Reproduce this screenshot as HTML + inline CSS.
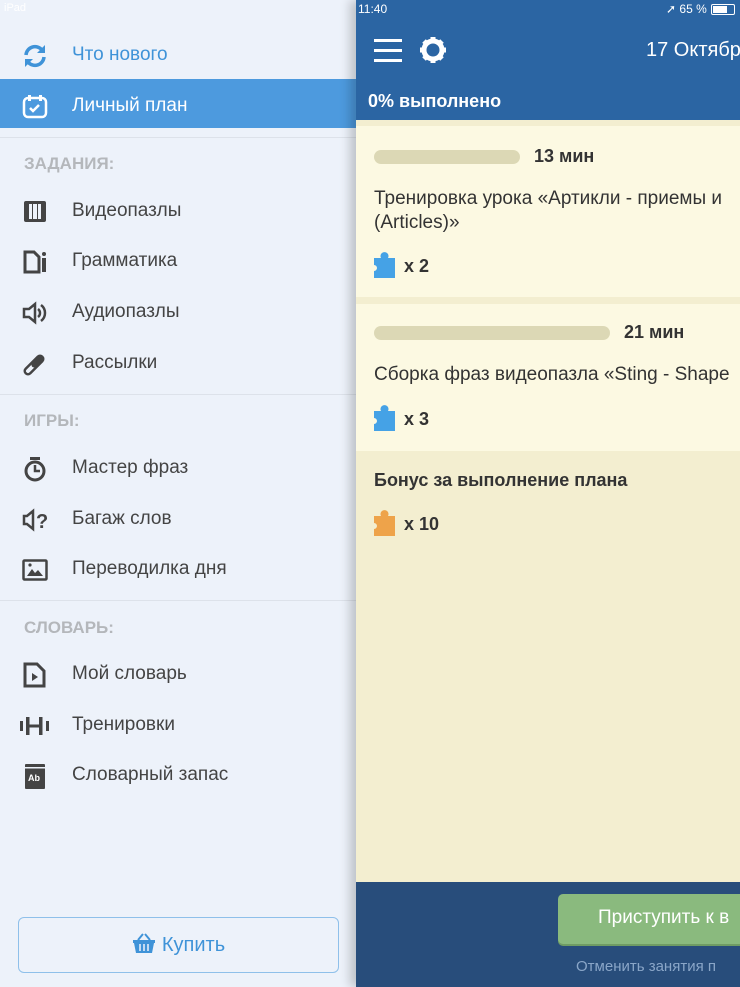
<!DOCTYPE html>
<html><head><meta charset="utf-8"><style>
*{margin:0;padding:0;box-sizing:border-box}
body{width:740px;height:987px;overflow:hidden;position:relative;font-family:"Liberation Sans","DejaVu Sans",sans-serif;background:#edf2fa}
.side{position:absolute;left:0;top:0;width:356px;height:987px;background:#edf2fa}
.it{position:absolute;left:0;width:356px;height:40px;font-size:19px;color:#444;line-height:44px}
.it .t{position:absolute;left:72px;top:0}
.it svg{position:absolute;left:22px;top:10px}
.hd{position:absolute;left:24px;font-size:17px;font-weight:bold;color:#b4b7bb;margin-top:1px}
.dv{position:absolute;left:0;width:356px;height:1px;background:#dde2ea}
.main{position:absolute;left:356px;top:0;width:384px;height:987px;box-shadow:-6px 0 10px rgba(0,0,0,.2)}
</style></head><body>
<div class="side">
<div style="position:absolute;left:4px;top:2px;font-size:11px;color:#fff">iPad</div>
<div class="it" style="top:33px;color:#3f93d8"><svg width="26" height="26" viewBox="0 0 26 26"><path d="M4 12a9 9 0 0 1 16-5M22 14a9 9 0 0 1-16 5" fill="none" stroke="#3f93d8" stroke-width="3.5"/><path d="M23 2v8h-8zM3 24v-8h8z" fill="#3f93d8"/></svg><span class="t">Что нового</span></div>
<div style="position:absolute;left:0;top:79px;width:356px;height:49px;background:#4d9ade"></div>
<div class="it" style="top:84px;color:#fff"><svg width="26" height="26" viewBox="0 0 26 26"><rect x="2" y="4" width="22" height="19" rx="4" fill="none" stroke="#fff" stroke-width="2.5"/><rect x="6" y="1" width="3" height="6" fill="#fff"/><rect x="17" y="1" width="3" height="6" fill="#fff"/><path d="M8 14l3 3 6-6" fill="none" stroke="#fff" stroke-width="2.5"/></svg><span class="t">Личный план</span></div>
<div class="dv" style="top:137px"></div>
<div class="hd" style="top:153px">ЗАДАНИЯ:</div>
<div class="it" style="top:189px"><svg width="26" height="26" viewBox="0 0 26 26"><rect x="2" y="2" width="22" height="21" rx="2" fill="#444"/><rect x="7" y="5" width="3" height="15" fill="#edf2fa"/><rect x="16" y="5" width="3" height="15" fill="#edf2fa"/><rect x="11" y="5" width="4" height="15" fill="#edf2fa"/></svg><span class="t">Видеопазлы</span></div>
<div class="it" style="top:239px"><svg width="26" height="26" viewBox="0 0 26 26"><path d="M3 3h9l5 5v15H3z" fill="none" stroke="#444" stroke-width="3"/><circle cx="22" cy="5" r="2" fill="#444"/><rect x="20" y="9" width="4" height="14" fill="#444"/></svg><span class="t">Грамматика</span></div>
<div class="it" style="top:290px"><svg width="26" height="26" viewBox="0 0 26 26"><path d="M2 9h5l6-5v18l-6-5H2z" fill="none" stroke="#444" stroke-width="2.5"/><path d="M16 9a5 5 0 0 1 0 8M19 5a10 10 0 0 1 0 16" fill="none" stroke="#444" stroke-width="2.5"/></svg><span class="t">Аудиопазлы</span></div>
<div class="it" style="top:341px"><svg width="26" height="26" viewBox="0 0 26 26"><path d="M6 20L18 8" stroke="#444" stroke-width="9" stroke-linecap="round"/><path d="M6 20L18 8" stroke="#edf2fa" stroke-width="4" stroke-linecap="round"/><path d="M12 14L18 8" stroke="#444" stroke-width="5" stroke-linecap="round"/></svg><span class="t">Рассылки</span></div>
<div class="dv" style="top:394px"></div>
<div class="hd" style="top:410px">ИГРЫ:</div>
<div class="it" style="top:446px"><svg width="26" height="26" viewBox="0 0 26 26"><circle cx="13" cy="15" r="9" fill="none" stroke="#444" stroke-width="3"/><rect x="8" y="1" width="10" height="3" fill="#444"/><path d="M13 9v6h5" fill="none" stroke="#444" stroke-width="2.5"/></svg><span class="t">Мастер фраз</span></div>
<div class="it" style="top:497px"><svg width="28" height="26" viewBox="0 0 28 26"><path d="M2 9h3l6-5v18l-6-5H2z" fill="none" stroke="#444" stroke-width="2.5"/><text x="14" y="21" font-size="20" font-weight="bold" fill="#444" font-family="Liberation Sans">?</text></svg><span class="t">Багаж слов</span></div>
<div class="it" style="top:547px"><svg width="26" height="26" viewBox="0 0 26 26"><rect x="1.5" y="3.5" width="23" height="19" rx="1" fill="none" stroke="#444" stroke-width="2.5"/><path d="M5 19l5-7 3 4 3-3 5 6z" fill="#444"/><circle cx="8" cy="8" r="1.6" fill="#444"/></svg><span class="t">Переводилка дня</span></div>
<div class="dv" style="top:600px"></div>
<div class="hd" style="top:617px">СЛОВАРЬ:</div>
<div class="it" style="top:652px"><svg width="26" height="26" viewBox="0 0 26 26"><path d="M3 2h12l7 7v15H3z" fill="none" stroke="#444" stroke-width="3"/><path d="M10 11v8l6-4z" fill="#444"/></svg><span class="t">Мой словарь</span></div>
<div class="it" style="top:703px"><svg width="34" height="26" viewBox="0 0 34 26" style="left:19px"><rect x="1" y="8" width="3" height="10" fill="#444"/><rect x="7" y="4" width="3.5" height="18" fill="#444"/><rect x="10" y="11.5" width="10" height="3" fill="#444"/><rect x="20" y="4" width="3.5" height="18" fill="#444"/><rect x="27" y="8" width="3" height="10" fill="#444"/></svg><span class="t">Тренировки</span></div>
<div class="it" style="top:753px"><svg width="26" height="26" viewBox="0 0 26 26"><rect x="3" y="1" width="20" height="25" rx="1" fill="#444"/><rect x="3" y="4" width="20" height="1.5" fill="#edf2fa"/><text x="6" y="18" font-size="9" font-weight="bold" fill="#fff" font-family="Liberation Sans">Ab</text></svg><span class="t">Словарный запас</span></div>
<div style="position:absolute;left:18px;top:917px;width:321px;height:56px;border:1.5px solid #8fc0ea;border-radius:6px;color:#3f93d8;font-size:20px;line-height:55px;text-align:center"><svg width="24" height="22" viewBox="0 0 24 22" style="vertical-align:-3px;margin-right:6px"><path d="M6 8l5-6M18 8l-5-6" stroke="#3f93d8" stroke-width="2"/><path d="M1 8h22v3h-1l-2 10H4L2 11H1z" fill="#3f93d8"/><path d="M8 12v7M12 12v7M16 12v7" stroke="#edf2fa" stroke-width="1.5"/></svg>Купить</div>
</div>
<div class="main">
<div style="position:absolute;left:0;top:0;width:384px;height:120px;background:#2b65a3"></div>
<div style="position:absolute;left:2px;top:2px;font-size:12px;color:#fff">11:40</div>
<div style="position:absolute;left:310px;top:2px;font-size:12px;color:#fff">➚ 65 %</div>
<div style="position:absolute;left:355px;top:4px;width:24px;height:11px;border:1px solid #fff;border-radius:2px"><div style="width:14px;height:7px;margin:1px;background:#fff"></div></div>
<div style="position:absolute;left:18px;top:39px;width:28px;height:3px;background:#fff;box-shadow:0 10px 0 #fff,0 20px 0 #fff"></div>
<svg width="30" height="30" viewBox="0 0 30 30" style="position:absolute;left:62px;top:35px"><circle cx="15" cy="15" r="9" fill="none" stroke="#fff" stroke-width="5"/><g stroke="#fff" stroke-width="5"><path d="M15 2v5M15 23v5M2 15h5M23 15h5M6 6l3 3M21 21l3 3M24 6l-3 3M6 24l3-3"/></g></svg>
<div style="position:absolute;left:290px;top:39px;font-size:20px;color:#fff;white-space:nowrap">17 Октябр</div>
<div style="position:absolute;left:12px;top:91px;font-size:18px;font-weight:bold;color:#fff">0% выполнено</div>
<div style="position:absolute;left:0;top:120px;width:384px;height:762px;background:#f3eed0"></div>
<div style="position:absolute;left:0;top:126px;width:384px;height:171px;background:#fcf9e2"></div>
<div style="position:absolute;left:0;top:304px;width:384px;height:147px;background:#fcf9e2"></div>
<div style="position:absolute;left:18px;top:150px;width:146px;height:14px;border-radius:7px;background:#dcd8b5"></div>
<div style="position:absolute;left:178px;top:146px;font-size:18px;font-weight:bold;color:#333">13 мин</div>
<div style="position:absolute;left:18px;top:187px;font-size:19px;color:#333;line-height:24px;white-space:nowrap">Тренировка урока «Артикли - приемы и<br>(Articles)»</div>
<svg width="22" height="26" viewBox="0 0 22 26" style="position:absolute;left:18px;top:252px"><path d="M0 6h7a4 4 0 1 1 7 0h7v20H0v-7a3 3 0 1 0 0-6z" fill="#45a2e6"/></svg>
<div style="position:absolute;left:48px;top:256px;font-size:18px;font-weight:bold;color:#333">x 2</div>
<div style="position:absolute;left:18px;top:326px;width:236px;height:14px;border-radius:7px;background:#dcd8b5"></div>
<div style="position:absolute;left:268px;top:322px;font-size:18px;font-weight:bold;color:#333">21 мин</div>
<div style="position:absolute;left:18px;top:364px;font-size:19px;color:#333;white-space:nowrap">Сборка фраз видеопазла «Sting - Shape</div>
<svg width="22" height="26" viewBox="0 0 22 26" style="position:absolute;left:18px;top:405px"><path d="M0 6h7a4 4 0 1 1 7 0h7v20H0v-7a3 3 0 1 0 0-6z" fill="#45a2e6"/></svg>
<div style="position:absolute;left:48px;top:409px;font-size:18px;font-weight:bold;color:#333">x 3</div>
<div style="position:absolute;left:18px;top:470px;font-size:18px;font-weight:bold;color:#333">Бонус за выполнение плана</div>
<svg width="22" height="26" viewBox="0 0 22 26" style="position:absolute;left:18px;top:510px"><path d="M0 6h7a4 4 0 1 1 7 0h7v20H0v-7a3 3 0 1 0 0-6z" fill="#eea34a"/></svg>
<div style="position:absolute;left:48px;top:514px;font-size:18px;font-weight:bold;color:#333">x 10</div>
<div style="position:absolute;left:0;top:882px;width:384px;height:105px;background:#284d7b"></div>
<div style="position:absolute;left:202px;top:894px;width:200px;height:50px;border-radius:5px;background:#8aba7e;box-shadow:0 2px 0 #6f9c64"></div>
<div style="position:absolute;left:242px;top:907px;font-size:19px;color:#fff;white-space:nowrap">Приступить к в</div>
<div style="position:absolute;left:220px;top:958px;font-size:15px;color:#8aa6c8;white-space:nowrap">Отменить занятия п</div>
</div>
</body></html>
